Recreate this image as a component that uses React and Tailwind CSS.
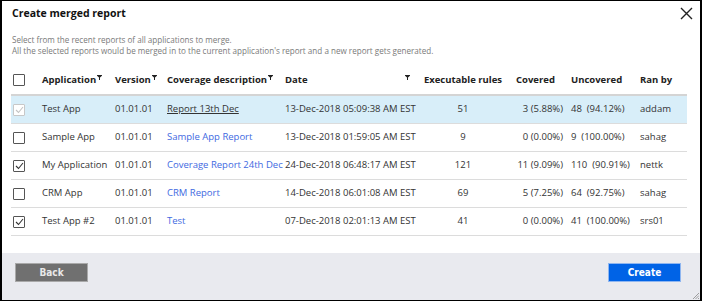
import React from 'react';

// ─── Datos de la tabla ────────────────────────────────────────────────────────
const rows = [
    { app: 'Test App', version: '01.01.01', desc: 'Report 13th Dec', date: '13-Dec-2018 05:09:38 AM EST', rules: '51', covered: '3 (5.88%)', uncovered: '48  (94.12%)', ranBy: 'addam', selected: true, checked: true, disabled: true },
    { app: 'Sample App', version: '01.01.01', desc: 'Sample App Report', date: '13-Dec-2018 01:59:05 AM EST', rules: '9', covered: '0 (0.00%)', uncovered: '9  (100.00%)', ranBy: 'sahag' },
    { app: 'My Application', version: '01.01.01', desc: 'Coverage Report 24th Dec', date: '24-Dec-2018 06:48:17 AM EST', rules: '121', covered: '11 (9.09%)', uncovered: '110  (90.91%)', ranBy: 'nettk', checked: true },
    { app: 'CRM App', version: '01.01.01', desc: 'CRM Report', date: '14-Dec-2018 06:01:08 AM EST', rules: '69', covered: '5 (7.25%)', uncovered: '64  (92.75%)', ranBy: 'sahag' },
    { app: 'Test App #2', version: '01.01.01', desc: 'Test', date: '07-Dec-2018 02:01:13 AM EST', rules: '41', covered: '0 (0.00%)', uncovered: '41  (100.00%)', ranBy: 'srs01', checked: true },
];

const FilterIcon = () => (
    <svg width="5" height="5" viewBox="0 0 5 5" className="ml-[1px] -mt-[5px] shrink-0">
        <path d="M0 0H5V0.8L3 2.6V5H2V2.6L0 0.8Z" fill="#222" />
    </svg>
);

const Checkbox = ({ checked, disabled }) => (
    <div className={`w-[12px] h-[12px] border rounded-[1px] bg-white flex items-center justify-center ${disabled ? 'border-[#c8c8c8]' : 'border-[#555]'}`}>
        {checked && (
            <svg width="9" height="8" viewBox="0 0 9 8">
                <path d="M1 4L3.5 6.5L8 1" fill="none" stroke={disabled ? '#c4c4c4' : '#333'} strokeWidth="1.1" />
            </svg>
        )}
    </div>
);

const App = () => {
    return (
        <div className="relative w-[702px] h-[301px] bg-white border-black border-t border-b border-l-2 border-r-2 flex flex-col font-['Open_Sans',sans-serif] text-[#333]">
            {/* Cabecera */}
            <div className="flex items-center justify-between h-[25px] pl-[10px] pr-[7px]">
                <h1 className="text-[10.5px] font-bold text-[#111]">Create merged report</h1>
                <svg width="13" height="13" viewBox="0 0 13 13">
                    <path d="M1 1L12 12M12 1L1 12" stroke="#222" strokeWidth="1.4" />
                </svg>
            </div>

            <div className="pl-[10px] pt-[8px] text-[8.1px] leading-[11px] text-[#7a7a7a]">
                <p>Select from the recent reports of all applications to merge.</p>
                <p>All the selected reports would be merged in to the current application's report and a new report gets generated.</p>
            </div>

            {/* Tabla */}
            <div className="ml-[9px] mr-[13px] mt-[10px] text-[9.5px]">
                <div className="flex items-center h-[30px] border-b-2 border-[#d4d4d4] font-bold text-[#222] whitespace-nowrap">
                    <div className="w-[31px] pl-[2px]"><Checkbox /></div>
                    <div className="w-[73px] flex items-center">Application<FilterIcon /></div>
                    <div className="w-[52px] flex items-center">Version<FilterIcon /></div>
                    <div className="w-[118px] flex items-center">Coverage description<FilterIcon /></div>
                    <div className="w-[137px] flex items-center justify-between pr-[12px]">Date<FilterIcon /></div>
                    <div className="w-[94px] pr-[12px] text-center">Executable rules</div>
                    <div className="w-[55px]">Covered</div>
                    <div className="w-[69px]">Uncovered</div>
                    <div className="flex-1">Ran by</div>
                </div>

                {rows.map((r) => (
                    <div key={r.app} className={`flex items-center h-[28px] border-b border-[#dcdcdc] whitespace-nowrap ${r.selected ? 'bg-[#d8eef9]' : ''}`}>
                        <div className="w-[31px] pl-[2px]"><Checkbox checked={r.checked} disabled={r.disabled} /></div>
                        <div className="w-[73px]">{r.app}</div>
                        <div className="w-[52px]">{r.version}</div>
                        <div className={`w-[118px] ${r.selected ? 'underline text-[#333]' : 'text-[#4169e1]'}`}>{r.desc}</div>
                        <div className="w-[137px]">{r.date}</div>
                        <div className="w-[94px] pr-[12px] text-center">{r.rules}</div>
                        <div className="w-[55px] pr-[8px] text-right">{r.covered}</div>
                        <div className="w-[69px] whitespace-pre">{r.uncovered}</div>
                        <div className="flex-1">{r.ranBy}</div>
                    </div>
                ))}
            </div>

            {/* Footer */}
            <div className="mt-auto h-[47px] bg-[#e9eaef] flex items-start justify-between pt-[10px] pl-[13px] pr-[19px] font-['DejaVu_Sans_Condensed','DejaVu_Sans',sans-serif] text-[10px] font-bold">
                <button className="w-[73px] h-[19px] bg-[#707070] border border-[#a9a9a9] text-[#e8e8e8]">Back</button>
                <button className="w-[73px] h-[19px] bg-[#0063e6] border border-[#8fb6f0] text-white">Create</button>
            </div>

            {/* Asa de redimensionado */}
            <svg width="6" height="6" viewBox="0 0 6 6" className="absolute right-[1px] bottom-[1px]">
                <path d="M6 0L0 6M6 2.5L2.5 6M6 5L5 6" stroke="#888" strokeWidth="0.8" />
            </svg>
        </div>
    );
};

export default App;
